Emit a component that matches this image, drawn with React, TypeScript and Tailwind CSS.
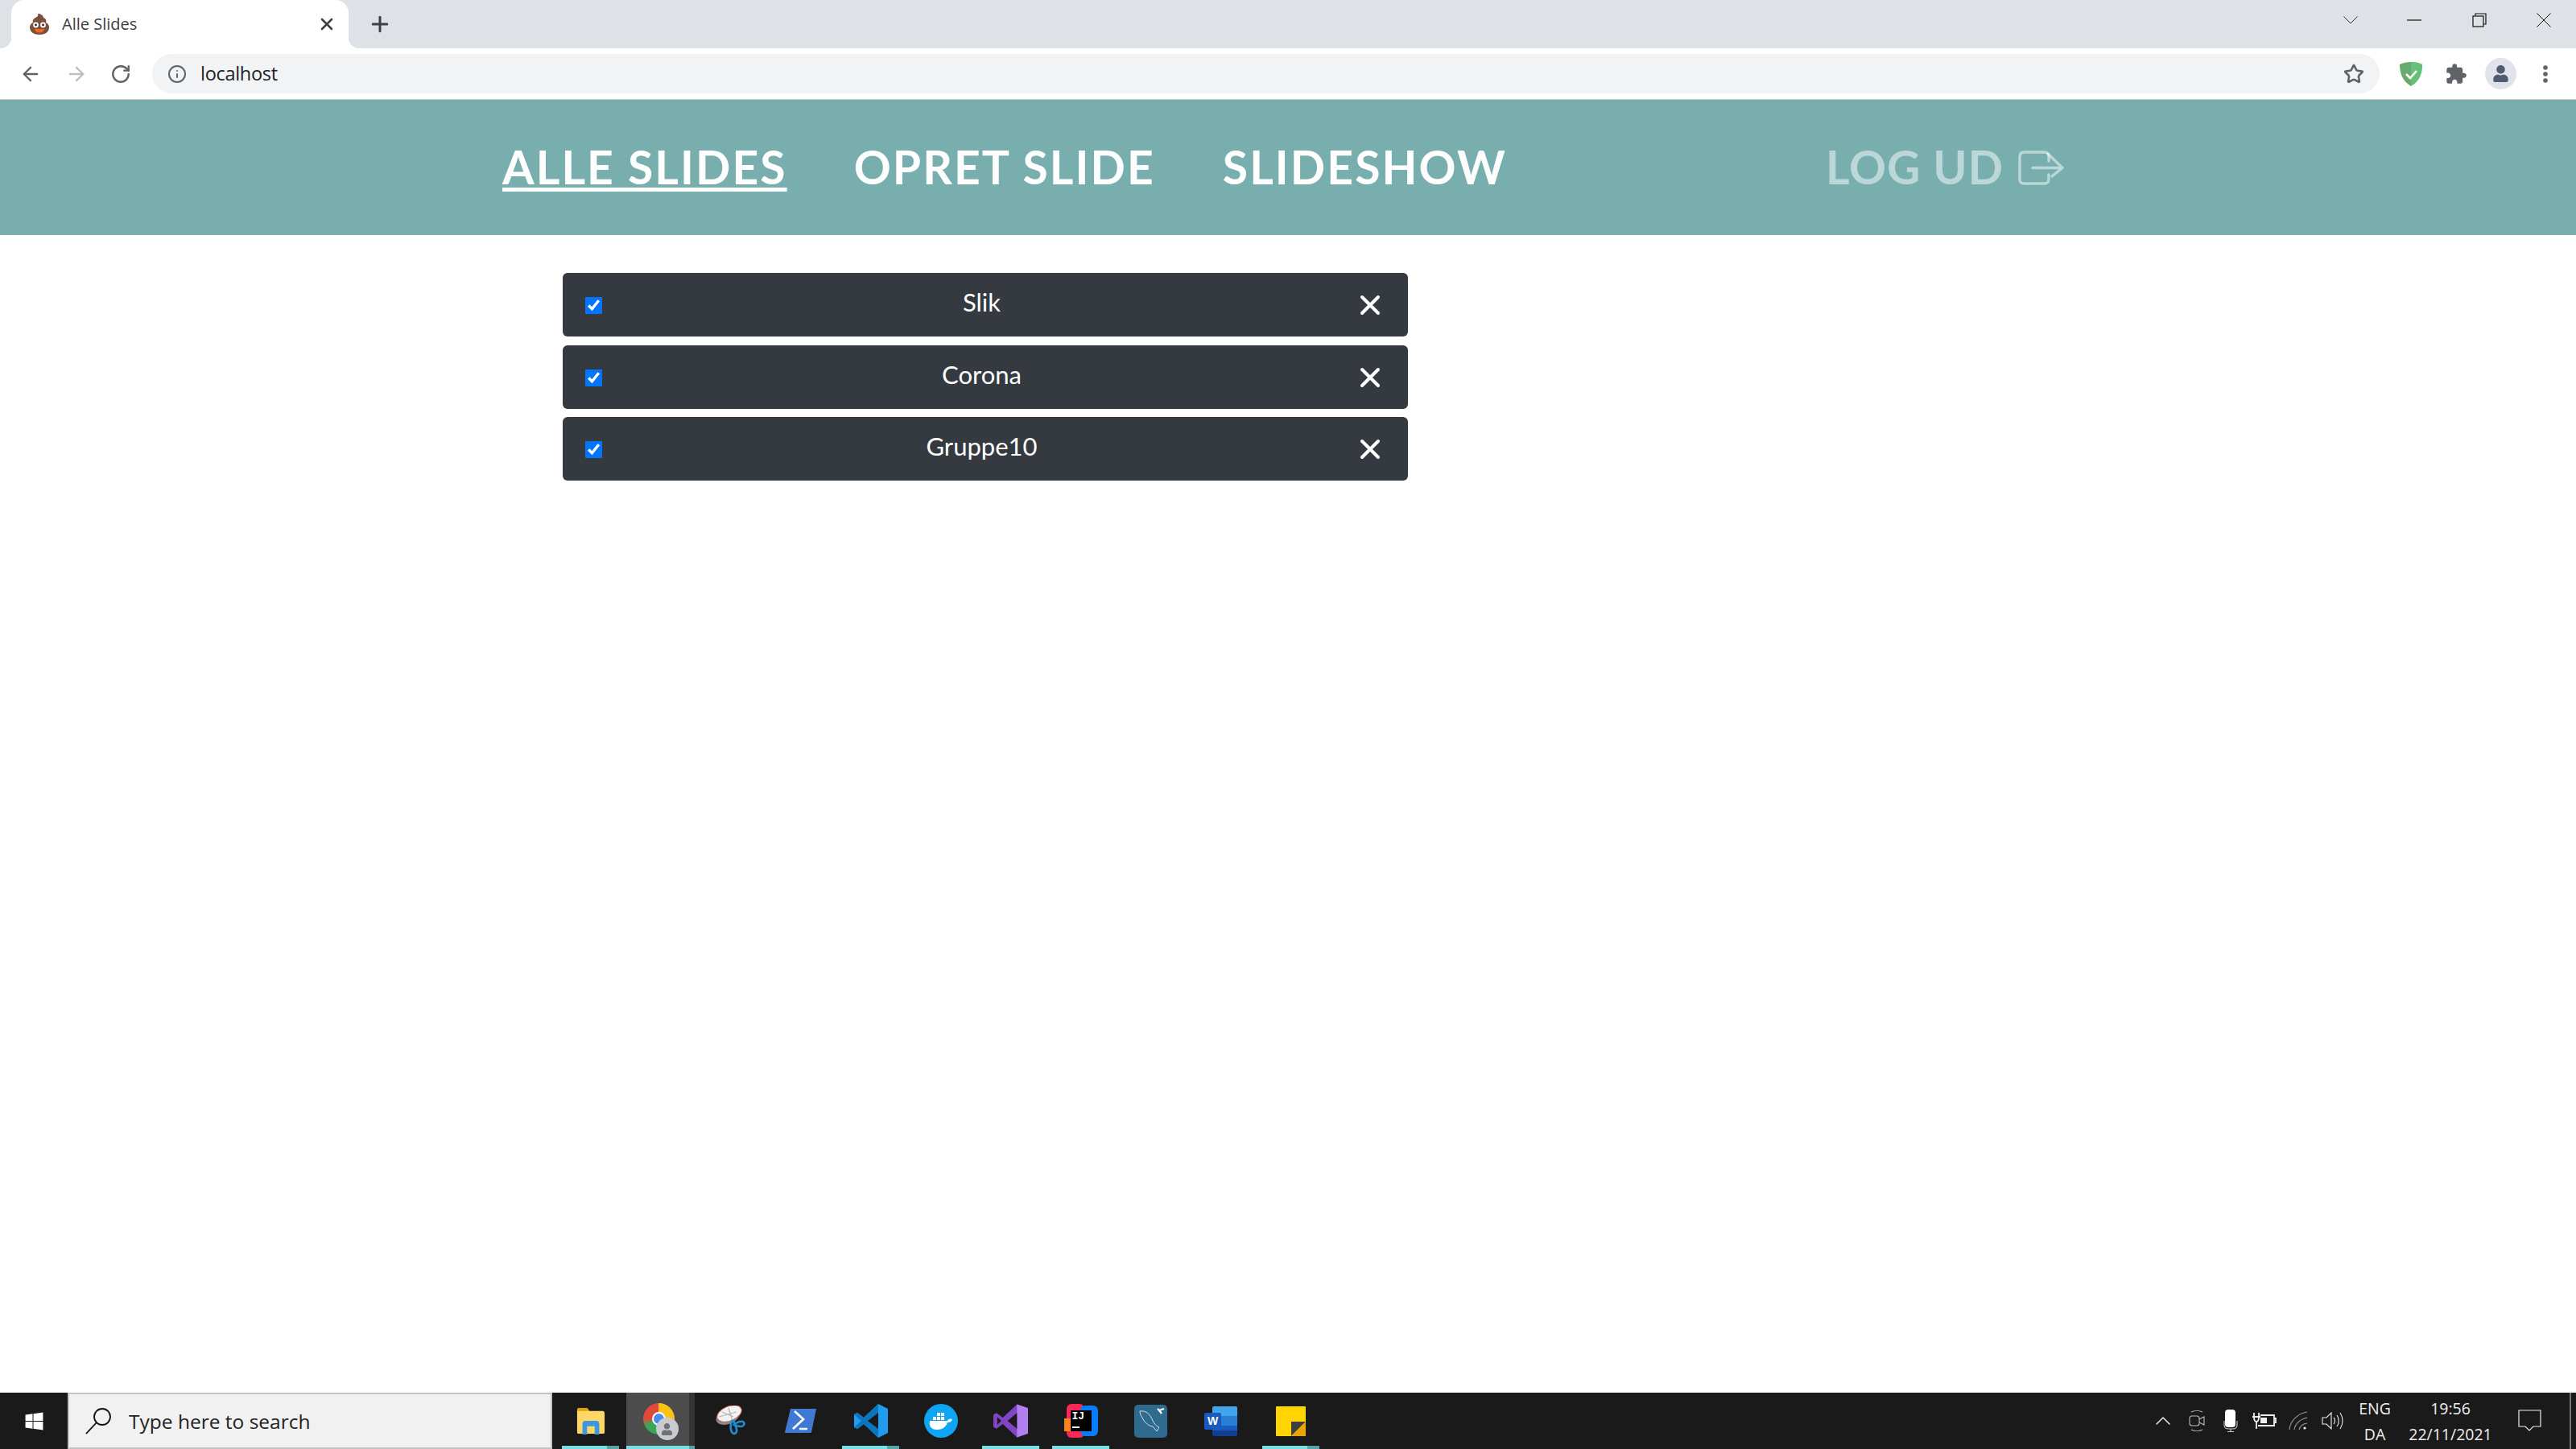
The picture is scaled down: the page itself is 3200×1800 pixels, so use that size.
import type { ReactNode } from 'react';
import { ArrowLeft, ArrowRight, RotateCw, Info, Star, Plus, X, ChevronUp } from 'lucide-react';
import { FaUser, FaWindows } from 'react-icons/fa';

const slides = ['Slik', 'Corona', 'Gruppe10'];

function BrowserChrome() {
  return (
    <div className="font-['Open_Sans',sans-serif]">
      <div className="h-[60px] bg-[#dee1e6] flex items-end">
        <div className="relative ml-[14px] w-[419px] h-[60px] bg-white rounded-t-[16px] flex items-center pl-[22px] pr-[15px]">
          <div className="absolute -left-[14px] bottom-0 w-[14px] h-[14px] bg-[radial-gradient(circle_at_0_0,#dee1e6_14px,#ffffff_14.5px)]" />
          <div className="absolute -right-[14px] bottom-0 w-[14px] h-[14px] bg-[radial-gradient(circle_at_100%_0,#dee1e6_14px,#ffffff_14.5px)]" />
          <svg width="26" height="28" viewBox="0 0 26 28">
            <path d="M11 1c3 0 7 2 7 5 3 1 4 3 3 6 4 2 5 6 3 10-2 4-7 5-11 5s-9-1-11-5c-2-4-1-8 3-10-1-3 1-5 3-6 2-1 4-2 3-5z" fill="#7d4f3d" />
            <circle cx="8.5" cy="15" r="3.4" fill="#fff" />
            <circle cx="17.5" cy="15" r="3.4" fill="#fff" />
            <circle cx="8.5" cy="15" r="1.4" fill="#222" />
            <circle cx="17.5" cy="15" r="1.4" fill="#222" />
            <path d="M7 20h12c-1 6-11 6-12 0z" fill="#f4661e" />
          </svg>
          <span className="ml-[15px] text-[20px] text-[#3c4043] tracking-[0px]">Alle Slides</span>
          <X className="ml-auto text-[#3c4043]" size={24} strokeWidth={2.6} />
        </div>
        <div className="ml-[24px] mb-[15px]">
          <Plus className="text-[#3c4043]" size={30} strokeWidth={2.4} />
        </div>
        <div className="ml-auto flex items-center self-start h-[50px] pr-[31px]">
          <svg width="18" height="10" viewBox="0 0 18 10" fill="none" stroke="#333" strokeWidth="1">
            <path d="M0.5 0.5L9 9l8.5-8.5" />
          </svg>
          <svg className="ml-[61px]" width="18" height="2" viewBox="0 0 18 2" stroke="#111" strokeWidth="1.2">
            <path d="M0 1h18" />
          </svg>
          <svg className="ml-[63px]" width="18" height="18" viewBox="0 0 18 18" fill="none" stroke="#111" strokeWidth="1.2">
            <path d="M4 3.5V1h13v13h-3" />
            <rect x="1" y="4" width="13" height="13" />
          </svg>
          <svg className="ml-[62px]" width="18" height="18" viewBox="0 0 18 18" stroke="#111" strokeWidth="1">
            <path d="M0.5 0.5l17 17M17.5 0.5l-17 17" />
          </svg>
        </div>
      </div>
      <div className="h-[64px] bg-white flex items-center border-b-[1px] border-[#c9d3d2]">
        <ArrowLeft className="ml-[24px] text-[#5f6368]" size={28} strokeWidth={2} />
        <ArrowRight className="ml-[29px] text-[#bdc1c6]" size={28} strokeWidth={2} />
        <RotateCw className="ml-[28px] text-[#5f6368]" size={26} strokeWidth={2.2} />
        <div className="ml-[26px] w-[2767px] h-[49px] rounded-full bg-[#f1f3f4] flex items-center pl-[19px] pr-[19px]">
          <Info className="text-[#5f6368]" size={24} strokeWidth={2} />
          <span className="ml-[17px] text-[23.5px] text-[#202124] tracking-[-0.3px]">localhost</span>
          <Star className="ml-auto text-[#5f6368]" size={26} strokeWidth={2.4} />
        </div>
        <svg className="ml-[25px]" width="28" height="30" viewBox="0 0 28 30">
          <path d="M14 0c5 0 10 1 14 3 0 12-4 21-14 27C4 24 0 15 0 3c4-2 9-3 14-3z" fill="#67a96f" />
          <path d="M14 0c5 0 10 1 14 3 0 12-4 21-14 27z" fill="#68c078" />
          <path d="M8 15l5 5 8-9" fill="none" stroke="#fff" strokeWidth="2.6" />
        </svg>
        <svg className="ml-[28px]" width="28" height="28" viewBox="0 0 24 24" fill="#5f6368">
          <path d="M20.5 11H19V7c0-1.1-.9-2-2-2h-4V3.5C13 2.12 11.88 1 10.5 1S8 2.12 8 3.5V5H4c-1.1 0-1.99.9-1.99 2v3.8H3.5c1.49 0 2.7 1.21 2.7 2.7s-1.21 2.7-2.7 2.7H2V20c0 1.1.9 2 2 2h3.8v-1.5c0-1.49 1.21-2.7 2.7-2.7 1.49 0 2.7 1.21 2.7 2.7V22H17c1.1 0 2-.9 2-2v-4h1.5c1.38 0 2.5-1.12 2.5-2.5S21.88 11 20.5 11z" />
        </svg>
        <div className="ml-[22px] w-[39px] h-[39px] rounded-full bg-[#e0e3e9] flex items-center justify-center">
          <FaUser className="text-[#505a70]" size={21} />
        </div>
        <svg className="ml-[33px]" width="6" height="24" viewBox="0 0 6 24" fill="#5f6368">
          <circle cx="3" cy="4" r="2.8" />
          <circle cx="3" cy="12" r="2.8" />
          <circle cx="3" cy="20" r="2.8" />
        </svg>
      </div>
    </div>
  );
}

function NavBar() {
  return (
    <nav className="h-[168px] bg-[#78afae] flex items-center pl-[624px] font-['Lato',sans-serif] font-bold text-[57px] tracking-[2.1px] text-white">
      <span className="underline decoration-[5px] underline-offset-[4px]">ALLE SLIDES</span>
      <span className="ml-[83px]">OPRET SLIDE</span>
      <span className="ml-[84px]">SLIDESHOW</span>
      <span className="ml-[396px] flex items-center tracking-[1px] text-white/50">
        LOG UD
        <svg className="ml-[18px]" width="57" height="43" viewBox="0 0 57 43" fill="none" stroke="currentColor" strokeWidth="3.4" strokeLinecap="round" strokeLinejoin="round">
          <path d="M38 13V7a5 5 0 0 0-5-5H7a5 5 0 0 0-5 5v29a5 5 0 0 0 5 5h26a5 5 0 0 0 5-5v-6" />
          <path d="M18 21.5h37M37 4l18 17.5L42 32" />
        </svg>
      </span>
    </nav>
  );
}

function SlideRow({ name }: { name: string }) {
  return (
    <div className="h-[79px] rounded-[6px] bg-[#343a40] flex items-center pl-[28px] pr-[27px] text-white">
      <input type="checkbox" defaultChecked readOnly className="w-[21px] h-[21px] mt-[2px] accent-[#0075ff]" />
      <span className="flex-1 text-center text-[31px] pl-[9px] pb-[6px] font-['Lato',sans-serif]">{name}</span>
      <X size={40} strokeWidth={2.4} className="mt-[1px]" />
    </div>
  );
}

function TaskItem({ children, active, stacked }: { children: ReactNode; active?: boolean; stacked?: boolean }) {
  return (
    <div className="relative w-[87px] h-full flex items-center justify-center">
      {children}
      {active && (
        <div className="absolute left-[8px] right-[8px] bottom-0 h-[4px] flex bg-[#76dfe8]">
          {stacked && <div className="ml-auto w-[15px] h-full bg-[#56a3a8]" />}
        </div>
      )}
    </div>
  );
}

function ChromeItem() {
  return (
    <div className="relative w-[87px] h-full flex items-center justify-center bg-[linear-gradient(to_right,#1a1a1a_1px,#4c4c4c_1px,#4c4c4c_79px,#343434_79px,#343434_86px,#1a1a1a_86px)]">
      <div className="relative w-[44px] h-[44px]">
        <div className="w-[39px] h-[39px] rounded-full bg-[conic-gradient(#fbc116_0deg_90deg,#3aa757_120deg_240deg,#e0493a_270deg_360deg)]" />
        <div className="absolute left-[11px] top-[11px] w-[17px] h-[17px] rounded-full bg-[#4a8cf0] border-[2px] border-white" />
        <div className="absolute left-[16px] top-[18px] w-[28px] h-[28px] rounded-full bg-[#c9cbce] flex items-center justify-center">
          <FaUser className="text-[#6d7278]" size={15} />
        </div>
      </div>
      <div className="absolute left-[1px] right-[1px] bottom-0 h-[4px] flex bg-[#76dfe8]">
        <div className="ml-auto w-[7px] h-full bg-[#56a3a8]" />
      </div>
    </div>
  );
}

function TaskbarIcons() {
  return (
    <div className="flex h-full">
      <TaskItem active stacked>
        <svg width="36" height="36" viewBox="0 0 38 36">
          <path d="M1 4a3 3 0 0 1 3-3h10l3 4h17a3 3 0 0 1 3 3v25a2 2 0 0 1-2 2H3a2 2 0 0 1-2-2z" fill="#ffd767" />
          <path d="M1 4a3 3 0 0 1 3-3h10l3 4H1z" fill="#e2a106" />
          <path d="M8 36V22a4 4 0 0 1 4-4h14a4 4 0 0 1 4 4v14h-6V25H14v11z" fill="#3c97e0" />
        </svg>
      </TaskItem>
      <ChromeItem />
      <TaskItem>
        <svg width="38" height="38" viewBox="0 0 38 38">
          <ellipse cx="15" cy="14" rx="15" ry="9" transform="rotate(-20 15 14)" fill="#8a8a8a" />
          <ellipse cx="17" cy="10" rx="16" ry="9" transform="rotate(-22 17 10)" fill="#f2f2f2" stroke="#d1534f" strokeWidth="1" />
          <path d="M4 14l22-6M16 3l5 16M8 8l14 6" stroke="#b5b5b5" strokeWidth="1.2" />
          <g fill="none" stroke="#1f8ecf" strokeWidth="2.6">
            <path d="M21 18c-3 5-3 10-1 15 3 4 7 1 6-4l-4-11" />
            <path d="M23 24c3-3 7-5 11-4 3 2 1 6-3 6-3 0-6-1-8-2z" />
          </g>
        </svg>
      </TaskItem>
      <TaskItem>
        <svg width="39" height="30" viewBox="0 0 39 30">
          <path d="M7 0h32l-6 29a1 1 0 0 1-1 1H1a1 1 0 0 1-1-1z" fill="#3f79d4" />
          <path d="M12 3l11 10-13 12" fill="none" stroke="#fff" strokeWidth="2.6" />
          <path d="M18 25h10" stroke="#fff" strokeWidth="2.4" />
        </svg>
      </TaskItem>
      <TaskItem active stacked>
        <svg width="42" height="42" viewBox="0 0 42 42">
          <path d="M30 0l12 6v30l-12 6L12 25l-8 6-4-2V13l4-2 8 6z" fill="#1f9cf0" />
          <path d="M30 0v42L12 25l-8 6-4-2 9-8-9-8 4-2 8 6z" fill="#0a77bd" />
          <path d="M30 11L17 21l13 10z" fill="#1a1a1a" />
        </svg>
      </TaskItem>
      <TaskItem>
        <div className="w-[42px] h-[42px] rounded-full bg-[#0ea5f5] flex items-center justify-center">
          <svg width="30" height="22" viewBox="0 0 30 22" fill="#fff">
            <path d="M1 11h22c1-3 4-3 6-2-1 3-3 4-6 4-2 6-7 9-13 9-8 0-10-5-9-11z" />
            <rect x="5" y="6" width="4" height="4" />
            <rect x="10" y="6" width="4" height="4" />
            <rect x="15" y="6" width="4" height="4" />
            <rect x="10" y="1" width="4" height="4" />
            <rect x="15" y="1" width="4" height="4" />
          </svg>
        </div>
      </TaskItem>
      <TaskItem active>
        <svg width="43" height="42" viewBox="0 0 44 42">
          <path d="M30 0l14 5v32l-14 5L12 25l-8 6-4-2V13l4-2 8 6z" fill="#7f45c4" />
          <path d="M30 0l14 5v32l-14 5z" fill="#b27ff0" />
          <path d="M30 11L18 21l12 10zM5 16v10l5-5z" fill="#1a1a1a" />
        </svg>
      </TaskItem>
      <TaskItem active>
        <div className="relative w-[42px] h-[42px]">
          <div className="absolute left-[3px] top-0 w-[22px] h-[42px] bg-[#fe2857] rounded-[6px]" />
          <div className="absolute left-[20px] top-[2px] w-[22px] h-[38px] bg-[#087cfa] rounded-[6px]" />
          <div className="absolute left-0 top-[18px] w-[10px] h-[16px] bg-[#fc801d]" />
          <div className="absolute left-[8px] top-[8px] w-[26px] h-[26px] bg-black text-white font-['Liberation_Mono',monospace] font-bold text-[13px] leading-[16px] pl-[2px]">
            IJ
            <div className="w-[9px] h-[2px] bg-white mt-[4px]" />
          </div>
        </div>
      </TaskItem>
      <TaskItem>
        <div className="w-[41px] h-[41px] rounded-[5px] bg-[#2f6a8f] flex items-center justify-center">
          <svg width="34" height="34" viewBox="0 0 34 34" fill="none" stroke="#cfe0ea" strokeWidth="1">
            <path d="M3 5c8-1 13 4 16 12 2 4 5 7 8 8l-3 5-5-6c-5 0-11-6-13-11C4 10 3 8 3 5z" />
            <path d="M33 2l-6 2M27 4l-2-2M27 4l3 4" strokeWidth="2.2" stroke="#ffffff" />
          </svg>
        </div>
      </TaskItem>
      <TaskItem>
        <div className="relative w-[41px] h-[37px]">
          <div className="absolute right-0 top-0 w-[31px] h-[37px] rounded-[2px] bg-[linear-gradient(#41a5ee_33%,#2b7cd3_33%_66%,#185abd_66%_80%,#103f91_80%)]" />
          <div className="absolute left-0 top-[8px] w-[21px] h-[21px] rounded-[2px] bg-[#185abd] text-white font-bold text-[14px] leading-[21px] text-center font-['Liberation_Sans',sans-serif]">W</div>
        </div>
      </TaskItem>
      <TaskItem active stacked>
        <svg width="37" height="37" viewBox="0 0 37 37">
          <rect width="37" height="37" rx="1" fill="#ffd400" />
          <path d="M19 19h18L19 37z" fill="#3f3f3f" />
          <path d="M37 19v18H19z" fill="#e8a600" />
        </svg>
      </TaskItem>
    </div>
  );
}

function TrayIcons() {
  return (
    <div className="flex items-center">
      <div className="w-[42px] flex justify-center">
        <ChevronUp size={32} strokeWidth={1.1} className="text-[#eee]" />
      </div>
      <div className="w-[42px] flex justify-center">
        <svg width="20" height="28" viewBox="0 0 20 28" fill="none" stroke="#bbb" strokeWidth="1.1">
          <path d="M3 3c4-2 10-2 14 0M3 25c4 2 10 2 14 0" />
          <rect x="1" y="8" width="12" height="12" rx="3" />
          <path d="M13 12l6-3v10l-6-3" />
        </svg>
      </div>
      <div className="w-[42px] flex justify-center">
        <svg width="18" height="28" viewBox="0 0 18 28" fill="none">
          <rect x="2" y="0" width="13" height="22" rx="4" fill="#fff" />
          <path d="M1 14v6a5 5 0 0 0 5 4h6a5 5 0 0 0 5-4v-6M9 24v3M5 27.500h8" stroke="#ccc" strokeWidth="1.1" />
        </svg>
      </div>
      <div className="w-[42px] flex justify-center">
        <svg width="30" height="22" viewBox="0 0 30 22" fill="none" stroke="#eee" strokeWidth="1.8">
          <path d="M2 1v5M8 1v5M0 6h10M2 6c0 4 1 6 3 6s3-2 3-6M5 12v9" />
          <path d="M10 4h17v13H7" />
          <path d="M27 8h2v5h-2" />
          <rect x="10" y="7" width="8" height="7" fill="#eee" stroke="none" />
        </svg>
      </div>
      <div className="w-[42px] flex justify-center">
        <svg width="24" height="24" viewBox="0 0 24 24" fill="none" stroke="#9a9a9a" strokeWidth="1.1">
          <path d="M1 23C2 12 11 3 23 1M7 23c1-7 7-13 16-15M13 23c1-4 4-7 10-8" />
          <circle cx="20" cy="21" r="1.6" fill="#eee" stroke="none" />
        </svg>
      </div>
      <div className="w-[42px] flex justify-center">
        <svg width="27" height="24" viewBox="0 0 27 24" fill="none" stroke="#eee" strokeWidth="1.1">
          <path d="M1 8h5l6-6v20l-6-6H1z" />
          <path d="M15 8c2 2 2 6 0 8M19 5c3 4 3 10 0 14M23 2c4 6 4 14 0 20" />
        </svg>
      </div>
    </div>
  );
}

function Taskbar() {
  return (
    <div className="h-[70px] bg-[#1a1a1a] flex items-stretch font-['Open_Sans',sans-serif] text-white">
      <div className="w-[84px] flex items-center justify-center">
        <FaWindows size={25} />
      </div>
      <div className="w-[602px] bg-[#f1f1f1] border-[2px] border-[#c3c3c3] flex items-center pl-[20px]">
        <svg width="33" height="33" viewBox="0 0 33 33" fill="none" stroke="#111" strokeWidth="1.8">
          <circle cx="21" cy="11" r="10" />
          <path d="M14 18L1 32" />
        </svg>
        <span className="ml-[21px] pt-[2px] text-[24.500px] text-[#222]">Type here to search</span>
      </div>
      <div className="ml-[4px]">
        <TaskbarIcons />
      </div>
      <div className="ml-auto flex items-center text-[#eee]">
        <TrayIcons />
        <div className="w-[64px] pt-[2px] flex flex-col items-center text-[19.500px] leading-[32px]">
          <span>ENG</span>
          <span>DA</span>
        </div>
        <div className="w-[124px] pt-[2px] flex flex-col items-center text-[19.500px] leading-[32px]">
          <span>19:56</span>
          <span>22/11/2021</span>
        </div>
        <div className="w-[72px] flex justify-center">
          <svg width="29" height="28" viewBox="0 0 29 28" fill="none" stroke="#eee" strokeWidth="1.2">
            <path d="M1 1h27v20h-9l-5 5-5-5H1z" />
          </svg>
        </div>
        <div className="ml-[14px] w-[2px] h-full bg-[#777]" />
        <div className="w-[6px]" />
      </div>
    </div>
  );
}

export default function App() {
  return (
    <div className="w-[3200px] h-[1800px] bg-white flex flex-col overflow-hidden">
      <BrowserChrome />
      <NavBar />
      <main className="flex-1">
        <div className="ml-[699px] mt-[47px] w-[1050px] flex flex-col gap-[10.5px]">
          {slides.map((s) => (
            <SlideRow key={s} name={s} />
          ))}
        </div>
      </main>
      <Taskbar />
    </div>
  );
}
